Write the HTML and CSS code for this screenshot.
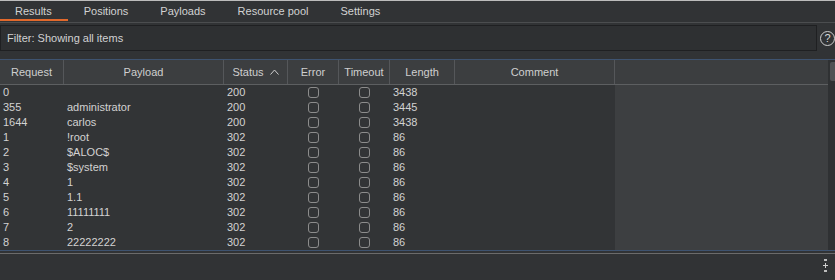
FILE: index.html
```html
<!DOCTYPE html>
<html lang="en">

<head>
  <meta charset="UTF-8">
  <meta name="viewport" content="width=device-width, initial-scale=1.0">
  <title>Intruder results</title>
  <link rel="stylesheet" href="styles.css">
</head>

<body>
  <!-- tabs -->
  <div class="tabs">
    <div class="tab active">Results</div>
    <div class="tab">Positions</div>
    <div class="tab">Payloads</div>
    <div class="tab">Resource pool</div>
    <div class="tab">Settings</div>
  </div>

  <!-- filter -->
  <div class="filter">
    <div class="filterBox">Filter: Showing all items</div>
    <div class="help">?</div>
  </div>

  <!-- results table -->
  <div class="results">
    <div class="view">
      <div class="thead">
        <div class="th">Request</div>
        <div class="th">Payload</div>
        <div class="th">Status
          <svg class="sort" width="9" height="6" viewBox="0 0 9 6">
            <polyline points="0.5,5.5 4.5,1 8.5,5.5" fill="none" stroke="#cfcfcf" stroke-width="1" />
          </svg>
        </div>
        <div class="th">Error</div>
        <div class="th">Timeout</div>
        <div class="th">Length</div>
        <div class="th">Comment</div>
        <div class="th last"></div>
      </div>
      <div class="tbody">
        <div class="rows" id="rows"></div>
        <div class="filler"></div>
      </div>
    </div>
    <div class="scrollbar">
      <div class="thumb"></div>
    </div>
  </div>

  <!-- bottom -->
  <div class="footer">
    <svg class="handle" width="5" height="13" viewBox="0 0 5 13">
      <rect x="1" y="0" width="3" height="2" fill="#bdbdbd" />
      <rect x="2" y="4" width="1" height="5" fill="#d0d0d0" />
      <rect x="0" y="6" width="5" height="1" fill="#d0d0d0" />
      <rect x="1" y="11" width="3" height="2" fill="#bdbdbd" />
    </svg>
  </div>

  <script type="text/javascript">
    var data = [
      ['0', '', '200', '3438'],
      ['355', 'administrator', '200', '3445'],
      ['1644', 'carlos', '200', '3438'],
      ['1', '!root', '302', '86'],
      ['2', '$ALOC$', '302', '86'],
      ['3', '$system', '302', '86'],
      ['4', '1', '302', '86'],
      ['5', '1.1', '302', '86'],
      ['6', '11111111', '302', '86'],
      ['7', '2', '302', '86'],
      ['8', '22222222', '302', '86']
    ];

    var html = '';
    for (var i = 0; i < data.length; i++) {
      var d = data[i];
      html += '<div class="row">' +
        '<div class="td">' + d[0] + '</div>' +
        '<div class="td">' + d[1] + '</div>' +
        '<div class="td">' + d[2] + '</div>' +
        '<div class="td check"><span class="box"></span></div>' +
        '<div class="td check"><span class="box"></span></div>' +
        '<div class="td">' + d[3] + '</div>' +
        '<div class="td"></div>' +
        '</div>';
    }
    document.querySelector('#rows').innerHTML = html;
  </script>
</body>

</html>
```

FILE: styles.css
```css
html,
body {
  margin: 0;
  padding: 0;
}

body {
  width: 835px;
  height: 280px;
  overflow: hidden;
  background-color: #313335;
  color: #d2d2d2;
  font-family: 'Liberation Sans', Arial, Helvetica, sans-serif;
  font-size: 11px;
  border-top: 1px solid #bcbcbc;
  box-sizing: border-box;
}

.tabs {
  display: flex;
  height: 21px;
  border-bottom: 1px solid #4b4d4f;
}

.tab {
  height: 20px;
  line-height: 21px;
  padding: 0 16px;
  box-sizing: border-box;
}

.tab.active {
  border-bottom: 2px solid #e2692c;
  padding: 0 16px 0 15px;
}

.filter {
  display: flex;
  align-items: center;
  padding: 2px 0 8px 0;
}

.filterBox {
  flex: 1;
  height: 26px;
  line-height: 24px;
  box-sizing: border-box;
  padding-left: 6px;
  background-color: #2e3032;
  border: 1px solid #1f2022;
}

.help {
  width: 15px;
  height: 15px;
  margin: 0 0 0 3px;
  box-sizing: border-box;
  border: 1px solid #cfcfcf;
  border-radius: 50%;
  text-align: center;
  line-height: 13px;
  font-size: 11px;
  color: #d8d8d8;
}

.results {
  display: flex;
  height: 192px;
  box-sizing: border-box;
  border-top: 1px solid #3e5370;
  border-bottom: 1px solid #3e5370;
}

.view {
  flex: 1;
  display: flex;
  flex-direction: column;
}

.thead {
  display: grid;
  grid-template-columns: 64px 160px 64px 51px 51px 65px 160px 1fr;
  height: 25px;
  box-sizing: border-box;
  background-color: #3c3e40;
  border-bottom: 1px solid #5d5f61;
}

.th {
  border-right: 1px solid #55575a;
  text-align: center;
  line-height: 24px;
  color: #cfcfcf;
  white-space: nowrap;
}

.th.last {
  border-right: none;
}

.sort {
  margin-left: 3px;
  vertical-align: 1px;
}

.tbody {
  flex: 1;
  display: flex;
}

.rows {
  width: 615px;
  background-color: #323436;
}

.row {
  display: grid;
  grid-template-columns: 64px 160px 64px 51px 51px 65px 160px;
  height: 15px;
  line-height: 15px;
}

.td {
  padding-left: 3px;
  white-space: nowrap;
}

.td.check {
  padding: 0;
  display: flex;
  justify-content: center;
  align-items: center;
}

.box {
  width: 11px;
  height: 11px;
  box-sizing: border-box;
  border: 1px solid #8c8c8c;
  border-radius: 3px;
}

.filler {
  flex: 1;
  background-color: #3d3f41;
}

.scrollbar {
  width: 7px;
  background-color: #2f3133;
  padding-top: 2px;
}

.thumb {
  width: 5px;
  height: 19px;
  margin-left: 2px;
  background-color: #505254;
  border-radius: 2px 0 0 2px;
}

.footer {
  display: flex;
  justify-content: flex-end;
  margin-top: 2px;
  border-top: 1px solid #6b6b6b;
  padding: 5px 7px 0 0;
}
```
